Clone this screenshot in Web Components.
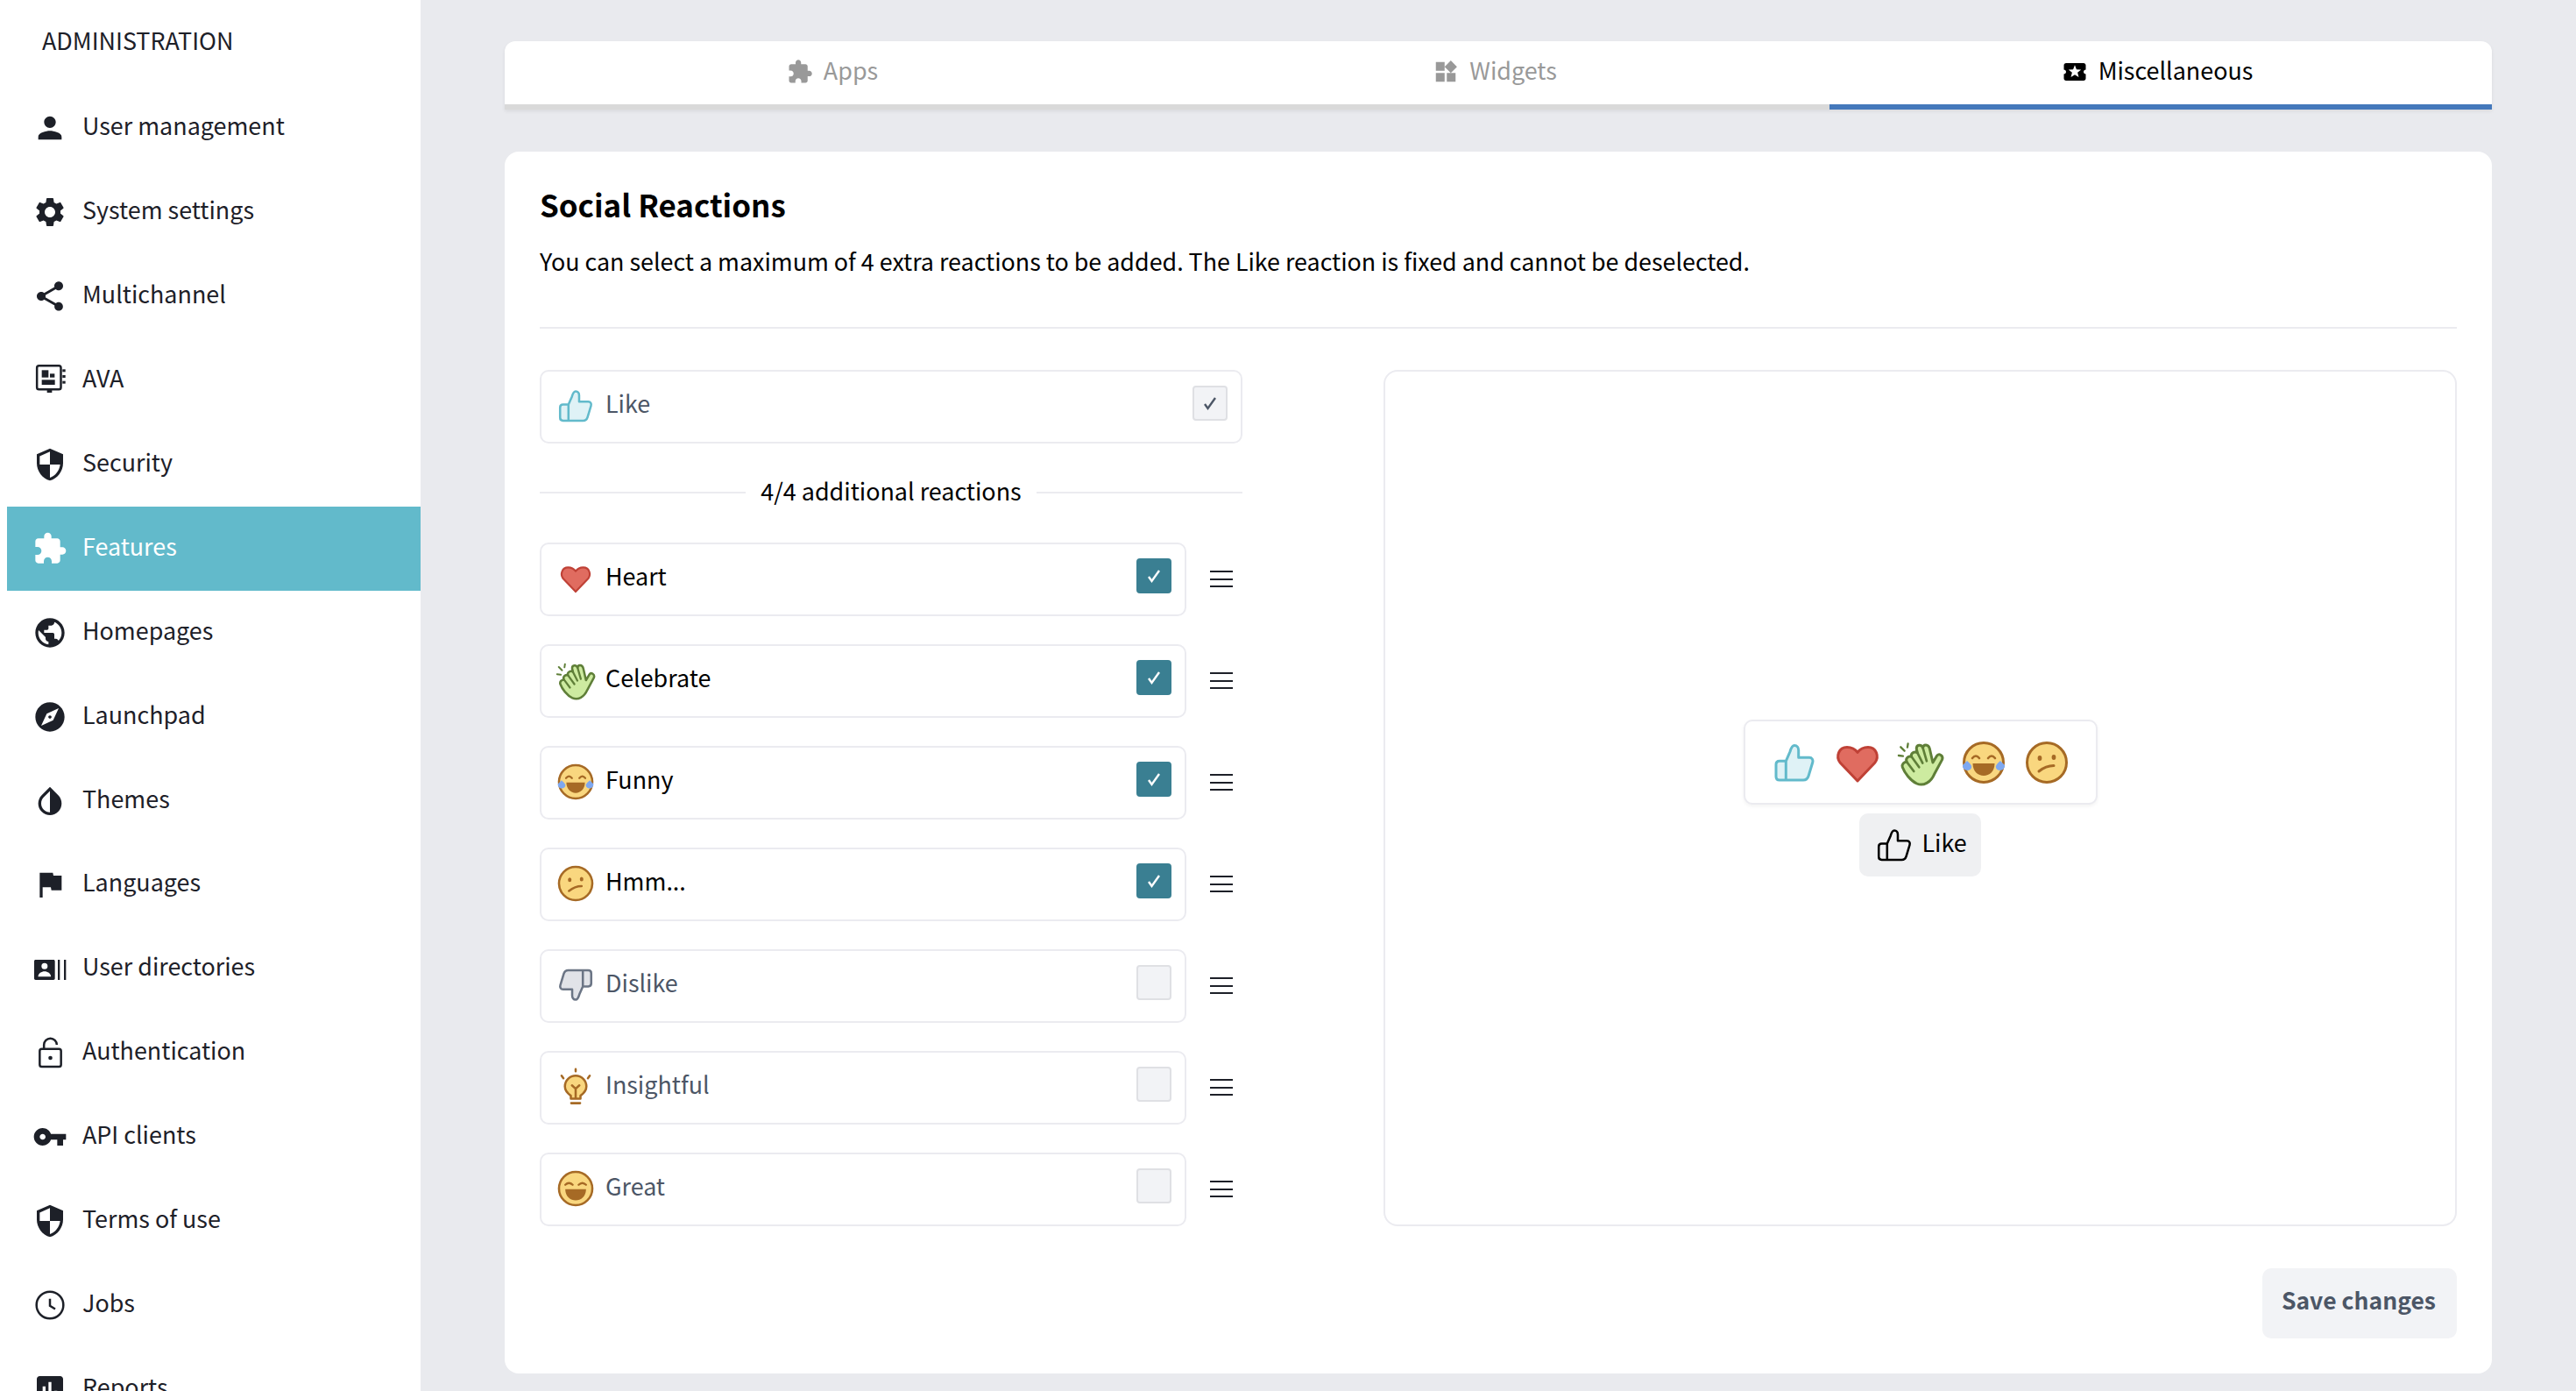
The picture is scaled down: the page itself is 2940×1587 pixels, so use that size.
<!DOCTYPE html>
<html lang="en">
<head>
<meta charset="utf-8">
<title>Social Reactions</title>
<style>
  html, body { margin: 0; height: 100%; overflow: hidden; background: #e9eaee; }
  body { font-family: "Noto Sans CJK SC", "Noto Sans", sans-serif; color: #1d2028; }
  admin-layout { height: 1587px; }
</style>
</head>
<body>
<admin-layout>
  <admin-sidebar slot="side" heading="ADMINISTRATION">
    <nav-item icon="user">User management</nav-item>
    <nav-item icon="gear">System settings</nav-item>
    <nav-item icon="share">Multichannel</nav-item>
    <nav-item icon="ava">AVA</nav-item>
    <nav-item icon="shield">Security</nav-item>
    <nav-item icon="puzzle" active>Features</nav-item>
    <nav-item icon="globe">Homepages</nav-item>
    <nav-item icon="compass">Launchpad</nav-item>
    <nav-item icon="drop">Themes</nav-item>
    <nav-item icon="flag">Languages</nav-item>
    <nav-item icon="directory">User directories</nav-item>
    <nav-item icon="lock">Authentication</nav-item>
    <nav-item icon="key">API clients</nav-item>
    <nav-item icon="shield">Terms of use</nav-item>
    <nav-item icon="clock">Jobs</nav-item>
    <nav-item icon="chart">Reports</nav-item>
  </admin-sidebar>

  <settings-tabs>
    <tab-item icon="puzzle">Apps</tab-item>
    <tab-item icon="widgets">Widgets</tab-item>
    <tab-item icon="ticket" active>Miscellaneous</tab-item>
  </settings-tabs>

  <reactions-card>
    <span slot="title">Social Reactions</span>
    <span slot="desc">You can select a maximum of 4 extra reactions to be added. The Like reaction is fixed and cannot be deselected.</span>

    <reaction-row slot="fixed" icon="like" locked checked>Like</reaction-row>
    <span slot="count">4/4 additional reactions</span>

    <reaction-row icon="heart" checked sortable>Heart</reaction-row>
    <reaction-row icon="clap" checked sortable>Celebrate</reaction-row>
    <reaction-row icon="funny" checked sortable>Funny</reaction-row>
    <reaction-row icon="hmm" checked sortable>Hmm...</reaction-row>
    <reaction-row icon="dislike" sortable>Dislike</reaction-row>
    <reaction-row icon="bulb" sortable>Insightful</reaction-row>
    <reaction-row icon="great" sortable>Great</reaction-row>

    <reactions-preview slot="preview"></reactions-preview>
    <span slot="save">Save changes</span>
  </reactions-card>
</admin-layout>

<script>
// glyphs for the sidebar and tabs, all on a 24 unit box
const GLYPHS = {
  user: '<path d="M12 12c2.21 0 4-1.79 4-4s-1.79-4-4-4-4 1.79-4 4 1.79 4 4 4zm0 2c-2.67 0-8 1.34-8 4v2h16v-2c0-2.66-5.33-4-8-4z"/>',
  gear: '<path d="M19.14 12.94c.04-.3.06-.61.06-.94 0-.32-.02-.64-.07-.94l2.03-1.58c.18-.14.23-.41.12-.61l-1.92-3.32c-.12-.22-.37-.29-.59-.22l-2.39.96c-.5-.38-1.03-.7-1.62-.94l-.36-2.54c-.04-.24-.24-.41-.48-.41h-3.84c-.24 0-.43.17-.47.41l-.36 2.54c-.59.24-1.13.57-1.62.94l-2.39-.96c-.22-.08-.47 0-.59.22L2.74 8.87c-.12.21-.08.47.12.61l2.03 1.58c-.05.3-.09.63-.09.94s.02.64.07.94l-2.03 1.58c-.18.14-.23.41-.12.61l1.92 3.32c.12.22.37.29.59.22l2.39-.96c.5.38 1.03.7 1.62.94l.36 2.54c.05.24.24.41.48.41h3.84c.24 0 .44-.17.47-.41l.36-2.54c.59-.24 1.13-.56 1.62-.94l2.39.96c.22.08.47 0 .59-.22l1.92-3.32c.12-.22.07-.47-.12-.61l-2.01-1.58zM12 15.6c-1.98 0-3.6-1.62-3.6-3.6s1.62-3.6 3.6-3.6 3.6 1.62 3.6 3.6-1.62 3.6-3.6 3.6z"/>',
  share: '<path d="M18 16.08c-.76 0-1.44.3-1.96.77L8.91 12.7c.05-.23.09-.46.09-.7s-.04-.47-.09-.7l7.05-4.11c.54.5 1.25.81 2.04.81 1.66 0 3-1.34 3-3s-1.34-3-3-3-3 1.34-3 3c0 .24.04.47.09.7L8.04 9.81C7.5 9.31 6.79 9 6 9c-1.66 0-3 1.34-3 3s1.34 3 3 3c.79 0 1.5-.31 2.04-.81l7.12 4.16c-.05.21-.08.43-.08.65 0 1.61 1.31 2.92 2.92 2.92 1.61 0 2.92-1.31 2.92-2.92s-1.31-2.92-2.92-2.92z"/>',
  ava: '<rect x="3.100" y="2" width="16.400" height="16.200" rx="1.400" fill="none" stroke="currentColor" stroke-width="1.500"/><rect x="6.400" y="5" width="4.600" height="5"/><rect x="12" y="7.400" width="3.200" height="2.600"/><rect x="6.400" y="11.600" width="9" height="3.400"/><rect x="20.600" y="4.400" width="2" height="1.800"/><rect x="20.600" y="8.400" width="2" height="1.800"/><rect x="20.600" y="12.400" width="2" height="1.800"/><rect x="10" y="18.600" width="3.400" height="1.800"/>',
  shield: '<path d="M12 1L3 5v6c0 5.55 3.84 10.74 9 12 5.16-1.26 9-6.45 9-12V5l-9-4zm0 10.99h7c-.53 4.12-3.28 7.79-7 8.94V12H5V6.3l7-3.11v8.8z"/>',
  puzzle: '<path d="M20.5 11H19V7c0-1.1-.9-2-2-2h-4V3.5C13 2.12 11.88 1 10.5 1S8 2.12 8 3.5V5H4c-1.1 0-1.99.9-1.99 2v3.8H3.5c1.49 0 2.7 1.21 2.7 2.7s-1.21 2.7-2.7 2.7H2V20c0 1.1.9 2 2 2h3.8v-1.5c0-1.49 1.21-2.7 2.7-2.7 1.49 0 2.7 1.21 2.7 2.7V22H17c1.1 0 2-.9 2-2v-4h1.5c1.38 0 2.5-1.12 2.5-2.5S21.88 11 20.5 11z"/>',
  globe: '<path d="M12 2C6.48 2 2 6.48 2 12s4.48 10 10 10 10-4.48 10-10S17.52 2 12 2zm-1 17.93c-3.95-.49-7-3.85-7-7.93 0-.62.08-1.21.21-1.79L9 15v1c0 1.1.9 2 2 2v1.93zm6.9-2.54c-.26-.81-1-1.39-1.9-1.39h-1v-3c0-.55-.45-1-1-1H8v-2h2c.55 0 1-.45 1-1V7h2c1.1 0 2-.9 2-2v-.41c2.93 1.19 5 4.06 5 7.41 0 2.08-.8 3.97-2.1 5.39z"/>',
  compass: '<path d="M12 10.9c-.61 0-1.1.49-1.1 1.1s.49 1.1 1.1 1.1c.61 0 1.1-.49 1.1-1.1s-.49-1.1-1.1-1.1zM12 2C6.48 2 2 6.48 2 12s4.48 10 10 10 10-4.48 10-10S17.52 2 12 2zm2.19 12.19L6 18l3.81-8.19L18 6l-3.81 8.19z"/>',
  drop: '<path d="M17.66 7.93L12 2.27 6.34 7.93c-3.12 3.12-3.12 8.19 0 11.31C7.9 20.8 9.95 21.58 12 21.58c2.05 0 4.1-.78 5.66-2.34 3.12-3.12 3.12-8.19 0-11.31zM12 19.59c-1.6 0-3.11-.62-4.24-1.76C6.62 16.69 6 15.19 6 13.59s.62-3.11 1.76-4.24L12 5.1v14.49z"/>',
  flag: '<path d="M14.4 6L14 4H5v17h2v-7h5.6l.4 2h7V6z"/>',
  directory: '<path fill-rule="evenodd" d="M2.2 6h12.2c.6 0 1 .4 1 1v11.8c0 .6-.4 1-1 1H2.2c-.6 0-1-.4-1-1V7c0-.6.4-1 1-1zM8.3 8.2a2.1 2.1 0 1 0 0 4.2 2.1 2.1 0 0 0 0-4.2zM3.9 17.6h8.8c0-2.2-2.4-3.6-4.4-3.6s-4.4 1.4-4.4 3.6z"/><rect x="17.400" y="6" width="1.400" height="13.800"/><rect x="21.600" y="6" width="1.400" height="13.800"/>',
  lock: '<rect x="5" y="9.400" width="14.600" height="12.200" rx="1.400" fill="none" stroke="currentColor" stroke-width="1.500"/><circle cx="12.300" cy="15.600" r="1.400"/><path d="M7.900 9.400V6.600a4.400 4.400 0 0 1 8.800 0" fill="none" stroke="currentColor" stroke-width="1.500"/>',
  key: '<path d="M12.65 10C11.83 7.67 9.61 6 7 6c-3.31 0-6 2.69-6 6s2.69 6 6 6c2.61 0 4.83-1.67 5.65-4H17v4h4v-4h2v-4H12.65zM7 14c-1.1 0-2-.9-2-2s.9-2 2-2 2 .9 2 2-.9 2-2 2z"/>',
  clock: '<circle cx="12" cy="12" r="9.200" fill="none" stroke="currentColor" stroke-width="1.500"/><path d="M12 7.600v4.900l3.600 2.200" fill="none" stroke="currentColor" stroke-width="1.500"/>',
  chart: '<path d="M19 3H5c-1.1 0-2 .9-2 2v14c0 1.1.9 2 2 2h14c1.1 0 2-.9 2-2V5c0-1.1-.9-2-2-2zM9 17H7v-7h2v7zm4 0h-2V7h2v10zm4 0h-2v-4h2v4z"/>',
  widgets: '<path d="M13 13v8h8v-8h-8zM3 21h8v-8H3v8zM3 3v8h8V3H3zm13.66-1.31L11 7.34 16.66 13l5.66-5.66-5.66-5.65z"/>',
  ticket: '<path d="M20 12c0-1.1.9-2 2-2V6c0-1.1-.9-2-2-2H4c-1.1 0-1.99.9-1.99 2v4c1.1 0 1.99.9 1.99 2s-.89 2-2 2v4c0 1.1.9 2 2 2h16c1.1 0 2-.9 2-2v-4c-1.1 0-2-.9-2-2zm-4.42 4.8L12 14.5l-3.58 2.3 1.08-4.12-3.29-2.69 4.24-.25L12 5.8l1.54 3.95 4.24.25-3.29 2.69 1.09 4.11z"/>'
};

// reaction artwork, all on a 52 unit box
const THUMB = 'M16.3 24.3 21 13.5C22.3 9 23.6 6.5 26 6.5c3 0 4.7 2.5 4.7 5.5v8.3H43c3 0 4.6 2.7 3.7 5.7L42 41.5C41 44.7 39 46 36 46H9c-2.5 0-4-1.5-4-4V28.3c0-2.5 1.5-4 4-4h7.3V46';
const BROWN = '#a66a25';
const SKIN = '#f9d77f';
const face = inner => `<circle cx="26" cy="26" r="22.5" fill="${SKIN}" stroke="${BROWN}" stroke-width="3"/>${inner}`;
const REACTIONS = {
  like: `<path d="${THUMB}" fill="#dff2f6" stroke="#62bacb" stroke-width="3" stroke-linejoin="round"/>`,
  plain: `<path d="${THUMB}" fill="none" stroke="#000" stroke-width="3" stroke-linejoin="round"/>`,
  dislike: `<path transform="rotate(180 26 26)" d="${THUMB}" fill="#e1e3e8" stroke="#6b7585" stroke-width="3" stroke-linejoin="round"/>`,
  heart: '<path d="M26 47 6 26C1 19 4.500 8.500 14 8.500c5 0 9.500 2.500 12 6 2.500-3.500 7-6 12-6 9.500 0 13 10.500 8 17.500z" fill="#e06c60" stroke="#bf4136" stroke-width="3" stroke-linejoin="round"/>',
  clap: `<g transform="translate(-205.7 -44) scale(.3333)" fill="none" stroke="#5f7f38" stroke-width="9" stroke-linecap="round" stroke-linejoin="round">
      <path d="M633 226C640 245 660 272 682 282 705 292 730 278 742 250L769 200C774 186 758 176 750 188L737 210 726 162C722 146 704 146 703 160 698 146 680 148 681 163L684 176C674 170 660 178 664 190 652 186 642 198 648 208 638 208 630 216 633 226Z" fill="#cdeba0"/>
      <path d="M684 176 702 212M664 190 690 226M648 208 672 240M703 160 716 205" stroke-width="8"/>
      <path d="M627 157 640 170M652 145 650 158M620 186 635 188" stroke-width="7"/>
    </g>`,
  funny: face(`<path d="M13 21q4-5 8 0M31 21q4-5 8 0" fill="none" stroke="${BROWN}" stroke-width="2.600" stroke-linecap="round"/><path d="M13.500 27h25c0 9-6 14-12.500 14s-12.500-5-12.500-14z" fill="${BROWN}"/><path d="M7 24c3 3 6 5 5 8-.8 2.600-4 3.400-6.500 2.600C3 33.700 1.500 31 2 29z" fill="#7ea8f0"/><path d="M45 24c-3 3-6 5-5 8 .8 2.600 4 3.400 6.500 2.600 2.500-.9 4-3.600 3.500-5.600z" fill="#7ea8f0"/>`),
  hmm: face(`<ellipse cx="18" cy="21" rx="2.400" ry="3" fill="${BROWN}"/><ellipse cx="34" cy="20" rx="2.400" ry="3" fill="${BROWN}"/><path d="M17 36q8-6.500 17-6.500" fill="none" stroke="${BROWN}" stroke-width="3" stroke-linecap="round"/>`),
  great: face(`<path d="M12 21q5-5 10 0M30 21q5-5 10 0" fill="none" stroke="${BROWN}" stroke-width="2.800" stroke-linecap="round"/><path d="M12 27h28c0 10-7 15-14 15s-14-5-14-15z" fill="${BROWN}"/>`),
  bulb: `<g fill="none" stroke="${BROWN}" stroke-width="3" stroke-linecap="round" stroke-linejoin="round">
      <path d="M19.500 42v-4C16 35.500 11.500 32 11.500 25.500a14.500 14.500 0 0 1 29 0c0 6.500-4.500 10-8 12.500v4z" fill="${SKIN}"/>
      <path d="M21 24l5 4.500 5-4.500M26 28.500V41M20 48h12M26 2v3M7 11l2.500 3.500M45 11l-2.500 3.500"/>
    </g>`
};

const define = (name, cls) => customElements.define(name, cls);

class AppIcon extends HTMLElement {
  constructor() {
    super();
    this.attachShadow({ mode: 'open' });
    this.shadowRoot.innerHTML = `
      <style>
        :host { display: block; width: var(--icon-size, 40px); height: var(--icon-size, 40px); flex: none; }
        svg { display: block; width: 100%; height: 100%; fill: currentColor; }
      </style>
      <svg viewBox="0 0 24 24">${GLYPHS[this.getAttribute('name')] || ''}</svg>`;
  }
}
define('app-icon', AppIcon);

class ReactionIcon extends HTMLElement {
  constructor() {
    super();
    this.attachShadow({ mode: 'open' });
    this.shadowRoot.innerHTML = `
      <style>
        :host { display: block; width: var(--reaction-size, 44px); height: var(--reaction-size, 44px); flex: none; }
        svg { display: block; width: 100%; height: 100%; overflow: visible; transform: scale(${this.getAttribute('scale') || 1}); }
      </style>
      <svg viewBox="0 0 52 52">${REACTIONS[this.getAttribute('name')] || ''}</svg>`;
  }
}
define('reaction-icon', ReactionIcon);

class AdminLayout extends HTMLElement {
  constructor() {
    super();
    this.attachShadow({ mode: 'open' });
    this.shadowRoot.innerHTML = `
      <style>
        :host { display: grid; grid-template-columns: 480px 1fr; overflow: hidden; }
        main { padding: 47px 96px 0; display: flex; flex-direction: column; gap: 48px; min-width: 0; }
      </style>
      <slot name="side"></slot>
      <main><slot></slot></main>`;
  }
}
define('admin-layout', AdminLayout);

class AdminSidebar extends HTMLElement {
  constructor() {
    super();
    this.attachShadow({ mode: 'open' });
    this.shadowRoot.innerHTML = `
      <style>
        :host { display: block; background: #fff; height: 1587px; overflow: hidden; padding-left: 8px; box-sizing: border-box; }
        h2 { margin: 0; height: 98.5px; padding: 24px 0 0 40px; box-sizing: border-box; font-size: 26.9px; font-weight: 400; line-height: 44px; }
      </style>
      <h2>${this.getAttribute('heading')}</h2>
      <slot></slot>`;
  }
}
define('admin-sidebar', AdminSidebar);

class NavItem extends HTMLElement {
  constructor() {
    super();
    this.attachShadow({ mode: 'open' });
    this.shadowRoot.innerHTML = `
      <style>
        :host { display: flex; align-items: center; height: 95.9px; padding-left: 29px; gap: 17px; font-size: 26.9px; color: #1d2028; }
        :host([active]) { background: #62bacb; color: #fff; }
        span { line-height: 44px; position: relative; top: -3px; }
      </style>
      <app-icon name="${this.getAttribute('icon')}"></app-icon>
      <span><slot></slot></span>`;
  }
}
define('nav-item', NavItem);

class SettingsTabs extends HTMLElement {
  constructor() {
    super();
    this.attachShadow({ mode: 'open' });
    this.shadowRoot.innerHTML = `
      <style>
        :host { display: grid; grid-template-columns: repeat(3, 1fr); background: #fff; border-radius: 12px 12px 0 0; box-shadow: 0 2px 4px rgba(0,0,0,.07); overflow: hidden; }
      </style>
      <slot></slot>`;
  }
}
define('settings-tabs', SettingsTabs);

class TabItem extends HTMLElement {
  constructor() {
    super();
    this.attachShadow({ mode: 'open' });
    this.shadowRoot.innerHTML = `
      <style>
        :host { display: flex; align-items: center; justify-content: center; gap: 12px; height: 72px; padding-right: 8px; border-bottom: 6px solid #d9d9d9; font-size: 26.9px; color: #999; --icon-size: 30px; }
        :host([active]) { color: #000; border-bottom-color: #4478bb; }
        span { line-height: 44px; position: relative; top: -3px; }
        app-icon { position: relative; top: -1px; }
      </style>
      <app-icon name="${this.getAttribute('icon')}"></app-icon>
      <span><slot></slot></span>`;
  }
}
define('tab-item', TabItem);

class ReactionsCard extends HTMLElement {
  constructor() {
    super();
    this.attachShadow({ mode: 'open' });
    this.shadowRoot.innerHTML = `
      <style>
        :host { display: block; background: #fff; border-radius: 16px; padding: 40px; color: #000; }
        .title { font-size: 34.9px; font-weight: 700; line-height: 46px; margin-top: -3px; }
        .desc { font-size: 26.85px; line-height: 46px; margin-top: 17px; padding-bottom: 54px; border-bottom: 2px solid #ebebf0; margin-bottom: 47px; }
        .desc slot { display: block; position: relative; top: 2px; }
        .cols { display: grid; grid-template-columns: 802px 1fr; gap: 161px; }
        .count { display: flex; align-items: center; gap: 17px; height: 44px; margin: 31px 0 38px; font-size: 26.9px; justify-content: center; }
        .count::before, .count::after { content: ""; flex: 1; height: 2px; background: #ebebf0; position: relative; top: 3px; }
        .list { display: flex; flex-direction: column; gap: 32px; }
        .foot { display: flex; justify-content: flex-end; margin-top: 48px; }
        .save { background: #f2f3f6; color: #4c5666; font-size: 26.5px; font-weight: 700; height: 80px; padding: 0 24px 0 22px; display: flex; align-items: center; border-radius: 10px; }
        .save slot { display: block; position: relative; top: -5px; }
      </style>
      <div class="title"><slot name="title"></slot></div>
      <div class="desc"><slot name="desc"></slot></div>
      <div class="cols">
        <div>
          <slot name="fixed"></slot>
          <div class="count"><slot name="count"></slot></div>
          <div class="list"><slot></slot></div>
        </div>
        <slot name="preview"></slot>
      </div>
      <div class="foot"><div class="save"><slot name="save"></slot></div></div>`;
  }
}
define('reactions-card', ReactionsCard);

class ReactionRow extends HTMLElement {
  constructor() {
    super();
    this.attachShadow({ mode: 'open' });
    const checked = this.hasAttribute('checked');
    const sortable = this.hasAttribute('sortable');
    const icon = this.getAttribute('icon');
    this.shadowRoot.innerHTML = `
      <style>
        :host { display: flex; align-items: center; gap: 27px; }
        .box { flex: 1; height: 84px; box-sizing: border-box; border: 2px solid #ebebf0; border-radius: 10px; display: flex; align-items: center; padding: 0 15px 0 17px; color: #4c5666; font-size: 26.9px; }
        :host([checked]:not([locked])) .box { color: #000; }
        reaction-icon { margin-top: -2px; }
        .name { flex: 1; margin-left: 12px; line-height: 44px; position: relative; top: -4px; }
        .check { width: 40px; height: 40px; box-sizing: border-box; border: 2px solid #dfe0e4; background: #f2f3f6; border-radius: 4px; margin-bottom: 9px; display: flex; align-items: center; justify-content: center; }
        :host([checked]:not([locked])) .check { background: #3a7f92; border-color: #3a7f92; color: #fff; }
        :host([locked]) .check { color: #4c5666; }
        .check svg { width: 24px; height: 24px; fill: none; stroke: currentColor; stroke-width: 2.4; }
        .drag { width: 26px; height: 19px; margin: 0 11px 1px 0; border-top: 2px solid #1d2028; border-bottom: 2px solid #1d2028; box-sizing: border-box; display: flex; align-items: center; }
        .drag::before { content: ""; height: 2px; flex: 1; background: #1d2028; }
      </style>
      <div class="box">
        <reaction-icon name="${icon}"${icon === 'heart' ? ' scale=".85"' : ''}></reaction-icon>
        <span class="name"><slot></slot></span>
        <span class="check">${checked ? '<svg viewBox="0 0 24 24"><path d="M6 13 9.500 18 18 6"/></svg>' : ''}</span>
      </div>
      ${sortable ? '<div class="drag"></div>' : ''}`;
  }
}
define('reaction-row', ReactionRow);

class ReactionsPreview extends HTMLElement {
  constructor() {
    super();
    this.attachShadow({ mode: 'open' });
    this.shadowRoot.innerHTML = `
      <style>
        :host { display: flex; flex-direction: column; align-items: center; justify-content: center; gap: 10px; border: 2px solid #ebebf0; border-radius: 16px; --reaction-size: 52px; }
        .bar { display: flex; gap: 20px; padding: 20.5px 30px; background: #fff; border: 2px solid #ebebf0; border-radius: 10px; box-shadow: 0 2px 4px rgba(0,0,0,.05); }
        .tip { display: flex; align-items: center; gap: 9px; height: 72px; padding: 0 16px 0 18px; background: #eff0f2; border-radius: 10px; font-size: 26.9px; color: #000; --reaction-size: 44px; }
        .tip span { line-height: 44px; position: relative; top: -3px; }
      </style>
      <div class="bar">
        <reaction-icon name="like"></reaction-icon>
        <reaction-icon name="heart"></reaction-icon>
        <reaction-icon name="clap"></reaction-icon>
        <reaction-icon name="funny"></reaction-icon>
        <reaction-icon name="hmm"></reaction-icon>
      </div>
      <div class="tip"><reaction-icon name="plain"></reaction-icon><span>Like</span></div>`;
  }
}
define('reactions-preview', ReactionsPreview);
</script>
</body>
</html>
